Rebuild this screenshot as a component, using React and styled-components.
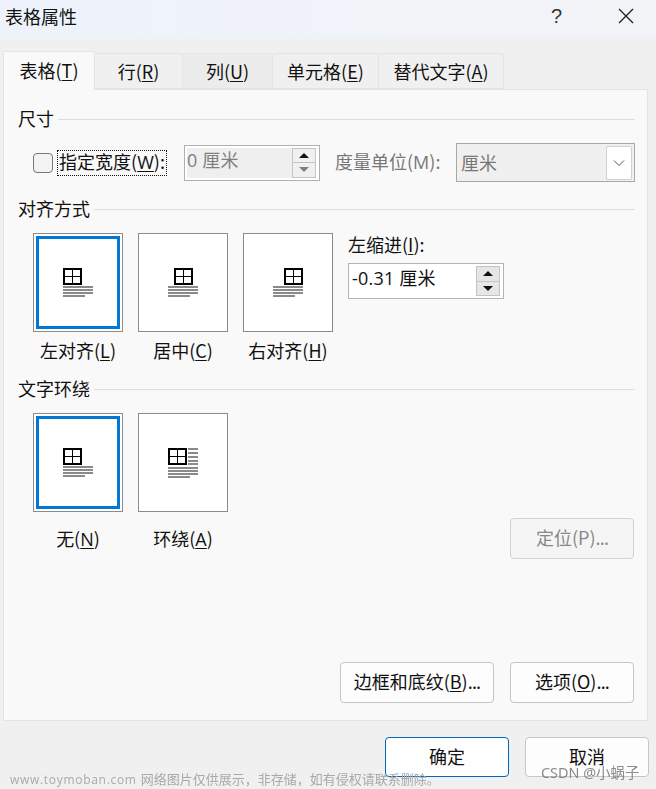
import React from 'react';
import styled, { createGlobalStyle } from 'styled-components';

const Global = createGlobalStyle`
  html, body { margin: 0; padding: 0; background: #f0f0f0; }
  * { box-sizing: border-box; }
`;

const Dialog = styled.div`
  position: relative;
  width: 656px;
  height: 789px;
  overflow: hidden;
  display: flex;
  flex-direction: column;
  background: #f0f0f0;
  color: #111;
  font-family: "Noto Sans CJK SC", "Noto Sans", sans-serif;
  font-size: 18px;
  line-height: 24px;
`;

const TitleBar = styled.header`
  height: 39px;
  flex: none;
  display: flex;
  align-items: center;
  padding: 0 22px 8px 5px;
  background: linear-gradient(90deg, #eef3fb 0%, #f0f3f9 50%, #f2f3f7 100%);
`;

const Title = styled.h1`
  margin: 0;
  flex: 1;
  font-size: 18px;
  font-weight: 400;
  line-height: 24px;
`;

const Help = styled.span`
  width: 14px;
  margin-right: 53px;
  font-family: "Liberation Sans", sans-serif;
  font-size: 20px;
  color: #333;
`;

const CloseIcon = styled.svg`
  width: 16px;
  height: 16px;
  margin-top: 1px;
  flex: none;
`;

const TabStrip = styled.nav`
  height: 38px;
  margin: 12px 0 0 3px;
  flex: none;
  display: flex;
  align-items: flex-end;
  position: relative;
  z-index: 1;
`;

const Tab = styled.div`
  width: ${p => p.$w}px;
  height: ${p => (p.$active ? 39 : 36)}px;
  margin-bottom: ${p => (p.$active ? -1 : 0)}px;
  display: flex;
  align-items: center;
  justify-content: center;
  padding-bottom: ${p => (p.$active ? 2 : 1)}px;
  background: ${p => (p.$active ? '#f9f9f9' : p.$hover ? '#ececec' : '#f0f0f0')};
  border: 1px solid #e4e4e4;
  border-left-width: ${p => (p.$first ? 1 : 0)}px;
  border-bottom-width: ${p => (p.$active ? 0 : 1)}px;
  border-radius: 2px 2px 0 0;
`;

const Mn = styled.span`
  text-decoration: underline;
  text-underline-offset: 2px;
  text-decoration-thickness: 1px;
`;

const WideMn = styled(Mn)`
  font-family: "Open Sans", sans-serif;
`;

const WideLetter = styled.span`
  font-family: "Open Sans", sans-serif;
`;

const Dots = styled.span`
  letter-spacing: -0.8px;
`;

const Panel = styled.main`
  width: 645px;
  height: 632px;
  margin-left: 3px;
  flex: none;
  padding: 17px 12px 17px 14px;
  display: flex;
  flex-direction: column;
  background: #f9f9f9;
  border: 1px solid #e4e4e4;
`;

const Section = styled.section`
  margin-top: ${p => p.$top || 0}px;
`;

const Legend = styled.div`
  height: 24px;
  padding-bottom: 2px;
  display: flex;
  align-items: center;
  gap: 4px;
  &::after {
    content: '';
    flex: 1;
    height: 1px;
    margin-top: 3px;
    background: #dedede;
  }
`;

const SizeRow = styled.div`
  height: 39px;
  margin: 12px 0 0 15px;
  display: flex;
  align-items: center;
`;

const Checkbox = styled.span`
  width: 20px;
  height: 20px;
  flex: none;
  margin-right: 4px;
  background: #f3f3f3;
  border: 1px solid #777;
  border-radius: 4px;
`;

const FocusLabel = styled.span`
  width: 110px;
  height: 26px;
  flex: none;
  margin-right: 17px;
  padding-bottom: 3px;
  display: flex;
  align-items: center;
  justify-content: center;
  white-space: nowrap;
  outline: 1px dotted #111;
  outline-offset: -1px;
`;

const Spin = styled.div`
  width: ${p => p.$w}px;
  height: 36px;
  flex: none;
  padding: 2px 3px 2px 2px;
  display: flex;
  align-items: stretch;
  background: #fff;
  border: 1px solid ${p => (p.$disabled ? '#b0b0b0' : '#b4b4b4')};
`;

const SpinValue = styled.div`
  flex: 1;
  padding: 0 0 ${p => (p.$disabled ? 5 : 6)}px ${p => (p.$disabled ? 0 : 1)}px;
  display: flex;
  align-items: center;
  white-space: pre;
  letter-spacing: 0.2px;
  font-family: "Open Sans", "Noto Sans CJK SC", sans-serif;
  background: ${p => (p.$disabled ? '#efefef' : '#fff')};
  color: ${p => (p.$disabled ? '#808080' : '#111')};
`;

const SpinButtons = styled.div`
  width: 24px;
  flex: none;
  display: flex;
  flex-direction: column;
`;

const SpinButton = styled.div`
  flex: 1;
  display: flex;
  align-items: center;
  justify-content: center;
  background: ${p => (p.$disabled ? '#f0f0f0' : '#e6e6e6')};
  border: 1px solid #c4c4c4;
  & + & { border-top: 0; }
`;

const Arrow = styled.span`
  width: 0;
  height: 0;
  border-left: 5px solid transparent;
  border-right: 5px solid transparent;
  ${p => (p.$down
    ? `border-top: 5px solid ${p.$color};`
    : `border-bottom: 5px solid ${p.$color};`)}
`;

const DisabledLabel = styled.span`
  width: 106px;
  flex: none;
  margin: 0 15px;
  padding-bottom: 2px;
  color: #777;
  white-space: nowrap;
`;

const Combo = styled.div`
  width: 179px;
  height: 39px;
  flex: none;
  padding: 2px 2px 2px 4px;
  display: flex;
  align-items: center;
  background: #f0f0f0;
  border: 1px solid #a8a8a8;
  color: #777;
`;

const ComboText = styled.span`
  flex: 1;
  padding-bottom: 2px;
`;

const ComboButton = styled.span`
  width: 26px;
  height: 34px;
  display: flex;
  align-items: center;
  justify-content: center;
  background: #fff;
  border: 1px solid #d0d0d0;
  border-radius: 2px;
`;

const TileRow = styled.div`
  margin: 12px 0 0 15px;
  display: flex;
  align-items: flex-start;
`;

const TileColumn = styled.div`
  width: 90px;
  flex: none;
  margin-right: 15px;
  display: flex;
  flex-direction: column;
  align-items: center;
`;

const Tile = styled.div`
  width: 90px;
  height: 99px;
  display: flex;
  align-items: center;
  justify-content: center;
  background: #fff;
  border: 1px solid #8a8a90;
  box-shadow: ${p => (p.$selected ? 'inset 0 0 0 2px #fff, inset 0 0 0 5px #0078d4' : 'none')};
`;

const TileLabel = styled.div`
  margin-top: ${p => p.$gap}px;
  margin-bottom: 1px;
  white-space: nowrap;
`;

const IndentColumn = styled.div`
  width: 156px;
  flex: none;
  margin-top: -1px;
`;

const IndentSpinWrap = styled.div`
  margin-top: 7px;
`;

const PushButton = styled.button`
  width: ${p => p.$w}px;
  height: ${p => p.$h || 41}px;
  padding: 0 0 3px;
  flex: none;
  font: inherit;
  color: ${p => (p.disabled ? '#888' : '#111')};
  background: ${p => (p.disabled ? '#f5f5f5' : p.$primary ? '#fefefe' : '#fdfdfd')};
  border: 1px solid ${p => (p.$primary ? '#0067c0' : p.disabled ? '#d2d2d2' : '#c6c6c6')};
  border-radius: 4px;
`;

const PositionButton = styled(PushButton)`
  margin: 105px 1px 0 auto;
`;

const PanelActions = styled.div`
  margin-top: auto;
  padding-right: 1px;
  display: flex;
  justify-content: flex-end;
  gap: 16px;
`;

const Footer = styled.footer`
  margin-top: 16px;
  padding-right: 7px;
  display: flex;
  justify-content: flex-end;
  gap: 16px;
`;

const WatermarkSite = styled.div`
  position: absolute;
  left: 10px;
  top: 770px;
  font-size: 13px;
  line-height: 18px;
  color: #a9a9a9;
  white-space: nowrap;
  filter: blur(0.3px);
`;

const SiteName = styled.span`
  font-family: "Open Sans", sans-serif;
  font-size: 12px;
  letter-spacing: 0.7px;
  margin-right: 4px;
`;

const WatermarkAuthor = styled.div`
  position: absolute;
  left: 541px;
  top: 763px;
  font-family: "Noto Sans", "Noto Sans CJK SC", sans-serif;
  font-size: 14.4px;
  line-height: 20px;
  color: rgba(110, 110, 110, 0.8);
  white-space: nowrap;
  filter: blur(0.3px);
`;

function TableGlyph({ x = 0, y = 0 }) {
  return (
    <g transform={`translate(${x} ${y})`}>
      <rect x="1" y="1" width="17" height="15" fill="#fff" stroke="#000" strokeWidth="2" />
      <path d="M9.5 1v15M1 8.5h17" stroke="#000" strokeWidth="1" fill="none" />
    </g>
  );
}

function TextLines({ y = 18 }) {
  return (
    <g fill="#8a8a8a">
      <rect x="0" y={y} width="30" height="2" />
      <rect x="0" y={y + 3} width="30" height="2" />
      <rect x="0" y={y + 6} width="30" height="2" />
      <rect x="0" y={y + 9} width="22" height="2" />
    </g>
  );
}

function PlacementIcon({ align = 'left', wrap = false }) {
  const x = align === 'left' ? 0 : align === 'center' ? 6 : 11;
  return (
    <svg width="30" height="30" viewBox="0 0 30 30" aria-hidden="true">
      <TableGlyph x={x} />
      {wrap && (
        <g fill="#8a8a8a">
          <rect x="20" y="0" width="10" height="2" />
          <rect x="20" y="4" width="10" height="2" />
          <rect x="20" y="8" width="10" height="2" />
          <rect x="20" y="12" width="10" height="2" />
          <rect x="20" y="15" width="10" height="2" />
        </g>
      )}
      <TextLines y={wrap ? 19 : 18} />
    </svg>
  );
}

function SpinBox({ value, width, disabled }) {
  return (
    <Spin $w={width} $disabled={disabled}>
      <SpinValue $disabled={disabled}>{value}</SpinValue>
      <SpinButtons>
        <SpinButton $disabled={disabled}><Arrow $color="#111" /></SpinButton>
        <SpinButton $disabled={disabled}><Arrow $down $color={disabled ? '#808080' : '#111'} /></SpinButton>
      </SpinButtons>
    </Spin>
  );
}

const TABS = [
  { w: 92, label: '表格', key: 'T', active: true, first: true },
  { w: 88, label: '行', key: 'R' },
  { w: 90, label: '列', key: 'U', hover: true },
  { w: 106, label: '单元格', key: 'E' },
  { w: 125, label: '替代文字', key: 'A' },
];

export default function App() {
  return (
    <Dialog>
      <Global />
      <TitleBar>
        <Title>表格属性</Title>
        <Help>?</Help>
        <CloseIcon viewBox="0 0 16 16" aria-hidden="true">
          <path d="M1 1l14 14M15 1L1 15" stroke="#222" strokeWidth="1.4" fill="none" />
        </CloseIcon>
      </TitleBar>

      <TabStrip>
        {TABS.map(t => (
          <Tab key={t.key} $w={t.w} $active={t.active} $first={t.first} $hover={t.hover}>
            <span>{t.label}(<Mn>{t.key}</Mn>)</span>
          </Tab>
        ))}
      </TabStrip>

      <Panel>
        <Section>
          <Legend>尺寸</Legend>
          <SizeRow>
            <Checkbox />
            <FocusLabel><span>指定宽度(<WideMn>W</WideMn>):</span></FocusLabel>
            <SpinBox value="0 厘米" width={136} disabled />
            <DisabledLabel>度量单位(<WideLetter>M</WideLetter>):</DisabledLabel>
            <Combo>
              <ComboText>厘米</ComboText>
              <ComboButton>
                <svg width="12" height="8" viewBox="0 0 12 8" aria-hidden="true">
                  <path d="M1 1.5l5 5 5-5" stroke="#555" strokeWidth="1" fill="none" />
                </svg>
              </ComboButton>
            </Combo>
          </SizeRow>
        </Section>

        <Section $top={15}>
          <Legend>对齐方式</Legend>
          <TileRow>
            <TileColumn>
              <Tile $selected><PlacementIcon align="left" /></Tile>
              <TileLabel $gap={6}>左对齐(<Mn>L</Mn>)</TileLabel>
            </TileColumn>
            <TileColumn>
              <Tile><PlacementIcon align="center" /></Tile>
              <TileLabel $gap={6}>居中(<Mn>C</Mn>)</TileLabel>
            </TileColumn>
            <TileColumn>
              <Tile><PlacementIcon align="right" /></Tile>
              <TileLabel $gap={6}>右对齐(<Mn>H</Mn>)</TileLabel>
            </TileColumn>
            <IndentColumn>
              <div>左缩进(<Mn>I</Mn>):</div>
              <IndentSpinWrap>
                <SpinBox value="-0.31 厘米" width={156} />
              </IndentSpinWrap>
            </IndentColumn>
          </TileRow>
        </Section>

        <Section $top={14}>
          <Legend>文字环绕</Legend>
          <TileRow>
            <TileColumn>
              <Tile $selected><PlacementIcon align="left" /></Tile>
              <TileLabel $gap={14}>无(<WideMn>N</WideMn>)</TileLabel>
            </TileColumn>
            <TileColumn>
              <Tile><PlacementIcon align="left" wrap /></Tile>
              <TileLabel $gap={14}>环绕(<WideMn>A</WideMn>)</TileLabel>
            </TileColumn>
            <PositionButton $w={124} disabled>定位(P)<Dots>...</Dots></PositionButton>
          </TileRow>
        </Section>

        <PanelActions>
          <PushButton $w={154}>边框和底纹(<Mn>B</Mn>)<Dots>...</Dots></PushButton>
          <PushButton $w={124}>选项(<Mn>O</Mn>)<Dots>...</Dots></PushButton>
        </PanelActions>
      </Panel>

      <Footer>
        <PushButton $w={124} $h={40} $primary>确定</PushButton>
        <PushButton $w={124} $h={40}>取消</PushButton>
      </Footer>

      <WatermarkSite>
        <SiteName>www.toymoban.com</SiteName>网络图片仅供展示，非存储，如有侵权请联系删除。
      </WatermarkSite>
      <WatermarkAuthor>CSDN @小蜗子</WatermarkAuthor>
    </Dialog>
  );
}
